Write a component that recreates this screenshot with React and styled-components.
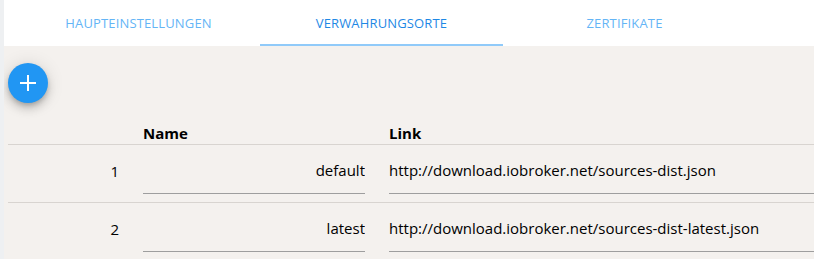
import React from 'react';
import styled, { createGlobalStyle } from 'styled-components';

const GlobalStyle = createGlobalStyle`
  html, body {
    margin: 0;
    padding: 0;
    background: #eef0f2;
    overflow: hidden;
  }
  body {
    font-family: 'Open Sans', 'Noto Sans', sans-serif;
  }
`;

const tabs = ['Haupteinstellungen', 'Verwahrungsorte', 'Zertifikate', 'Lizenzen'];

const repos = [
  { name: 'default', link: 'http://download.iobroker.net/sources-dist.json' },
  { name: 'latest', link: 'http://download.iobroker.net/sources-dist-latest.json' },
];

const App = () => {
  const active = 1;
  return (
    <>
      <GlobalStyle />
      <Page>
        <TabBar>
          {tabs.map((t, i) => (
            <Tab key={t} $active={i === active}>
              {t}
            </Tab>
          ))}
        </TabBar>
        <Content>
          <Fab aria-label='add'>
            <svg width='20' height='20' viewBox='0 0 20 20'>
              <path d='M10 2v16M2 10h16' stroke='#fff' strokeWidth='2' />
            </svg>
          </Fab>
          <Table>
            <thead>
              <tr>
                <Th />
                <Th>Name</Th>
                <Th>Link</Th>
              </tr>
            </thead>
            <tbody>
              {repos.map((r, i) => (
                <tr key={r.name}>
                  <NumCell>{i + 1}</NumCell>
                  <Td>
                    <Field $align='right' defaultValue={r.name} />
                  </Td>
                  <Td>
                    <Field defaultValue={r.link} />
                  </Td>
                </tr>
              ))}
            </tbody>
          </Table>
        </Content>
      </Page>
    </>
  );
};

const Page = styled.div`
  margin-left: 4px;
  width: 810px;
  height: 259px;
  background: #f4f1ee;
  overflow: hidden;
`;

const TabBar = styled.div`
  display: flex;
  height: 46px;
  background: #fff;
  padding-left: 13px;
  overflow: hidden;
`;

const Tab = styled.div`
  flex: 0 0 243px;
  display: flex;
  align-items: center;
  justify-content: center;
  box-sizing: border-box;
  padding-top: 1px;
  text-transform: uppercase;
  font-size: 13px;
  letter-spacing: 0.15px;
  color: ${(p) => (p.$active ? '#1e88e5' : '#64b5f6')};
  border-bottom: 2px solid ${(p) => (p.$active ? '#90caf9' : 'transparent')};
  white-space: nowrap;
`;

const Content = styled.div`
  padding: 17px 0 0 4px;
`;

const Fab = styled.button`
  width: 40px;
  height: 40px;
  border-radius: 50%;
  border: none;
  background: #2196f3;
  display: flex;
  align-items: center;
  justify-content: center;
  padding: 0;
  box-shadow: 0 3px 5px -1px rgba(0, 0, 0, 0.2), 0 6px 10px 0 rgba(0, 0, 0, 0.14),
    0 1px 18px 0 rgba(0, 0, 0, 0.12);
`;

const Table = styled.table`
  margin-top: 15px;
  width: 900px;
  border-collapse: collapse;
  font-size: 15px;
  color: #000;
  tr {
    border-bottom: 1px solid #d8d4d0;
  }
`;

const Th = styled.th`
  text-align: left;
  font-weight: 700;
  padding: 5px 0 1px;
  &:first-child {
    width: 135px;
  }
  &:nth-child(2) {
    width: 246px;
  }
`;

const NumCell = styled.td`
  text-align: right;
  vertical-align: top;
  padding: 16px 24px 0 0;
  height: 41px;
`;

const Td = styled.td`
  padding: 6px 24px 0 0;
  vertical-align: top;
`;

const Field = styled.input`
  width: 100%;
  box-sizing: border-box;
  border: none;
  border-bottom: 1px solid #9e9e9e;
  background: transparent;
  font: inherit;
  font-size: 15px;
  color: #000;
  padding: 9px 0 13px;
  text-align: ${(p) => p.$align || 'left'};
  outline: none;
`;

export default App;
